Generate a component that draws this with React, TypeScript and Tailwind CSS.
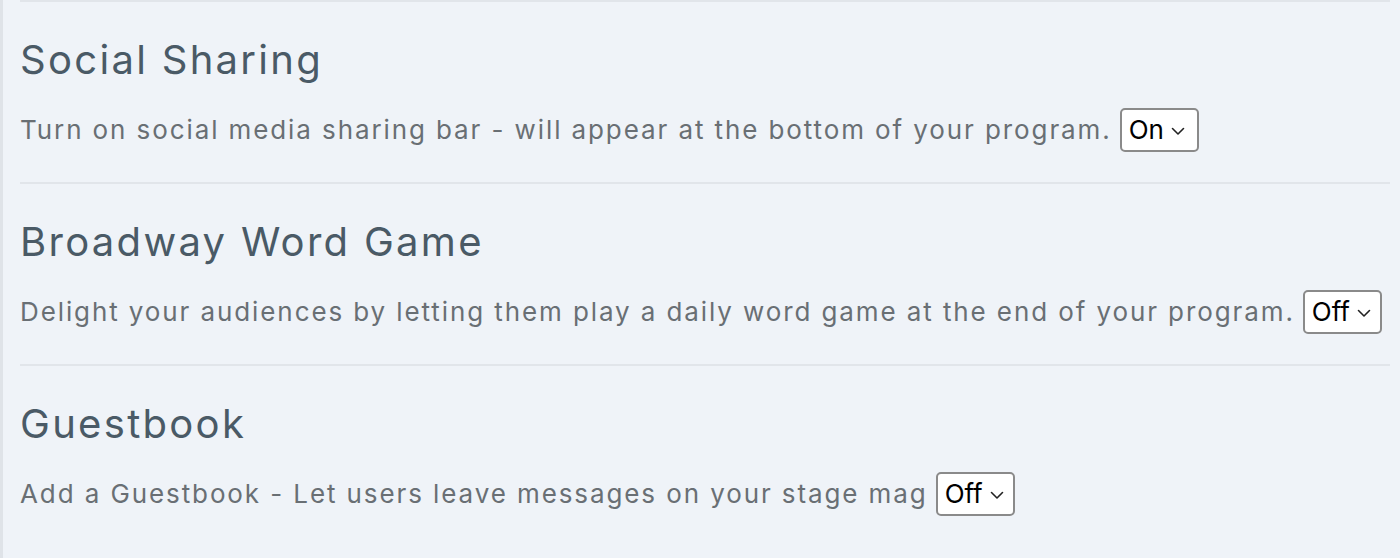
const features = [
  {
    title: "Social Sharing",
    text: "Turn on social media sharing bar - will appear at the bottom of your program.",
    value: "On",
  },
  {
    title: "Broadway Word Game",
    text: "Delight your audiences by letting them play a daily word game at the end of your program.",
    value: "Off",
  },
  {
    title: "Guestbook",
    text: "Add a Guestbook - Let users leave messages on your stage mag",
    value: "Off",
  },
];

function Chevron() {
  return (
    <svg width="14" height="9" viewBox="0 0 14 9" fill="none" className="ml-[7px] mt-[2px]">
      <path d="M1.5 1.5 7 7l5.5-5.5" stroke="#222" strokeWidth="1.6" strokeLinecap="round" strokeLinejoin="round" />
    </svg>
  );
}

export default function App() {
  return (
    <div className="h-[558px] w-[1400px] overflow-hidden bg-[#eff3f8] font-['Inter',sans-serif]">
      <div className="h-full border-l-[3px] border-[#dfe3e8] pl-[17px] pr-[10px]">
        {features.map((f) => (
          <section key={f.title} className="h-[182px] border-t-2 border-[#e1e5ea] pt-[34px]">
            <h2 className="text-[40px] leading-[48px] tracking-[2.3px] text-[#4a5a66]">{f.title}</h2>
            <div className="mt-[24px] flex h-[44px] items-center gap-[8px]">
              <p className="text-[26px] leading-[44px] tracking-[1.9px] text-[#696f74]">{f.text}</p>
              <div className="flex h-[44px] w-[79px] shrink-0 items-center rounded-[5px] border-2 border-[#8a8a8a] bg-white pl-[7px]">
                <span className="text-[26px] leading-none text-black">{f.value}</span>
                <Chevron />
              </div>
            </div>
          </section>
        ))}
      </div>
    </div>
  );
}
